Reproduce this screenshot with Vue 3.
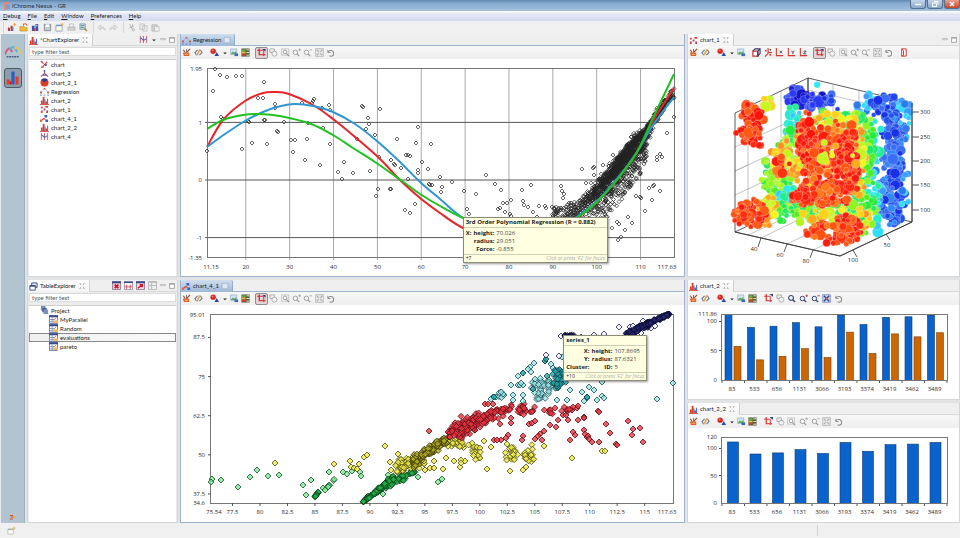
<script setup>
const menus = ['Debug', 'File', 'Edit', 'Window', 'Preferences', 'Help']

/* ---------- icons (10 x 10 artboards) ---------- */
const ic = {
  logo: '<path d="M2 1h6v2H5v2h3v2H5v3H2z" fill="#d98a7a"/><path d="M5 4h4v5H5z" fill="#7f9bc4"/>',
  newChart: '<path d="M1 9V5h2v4zM4 9V3h2v6z" fill="#d5342c"/><path d="M2 9V6h1v3zM6 9V4h1v5z" fill="#2a55b8"/><path d="M7 1.500h3M8.500 0v3.500" stroke="#e0a020"/>',
  open: '<path d="M1 4h5l1 1h2v4H1z" fill="#f0b93c" stroke="#a97414" stroke-width=".5"/><path d="M5 3V1h3l1 2" fill="none" stroke="#cf4a3c"/>',
  saveAll: '<path d="M1 3h3v6H1zM5 1h3v8H5z" fill="#2f55b5"/><path d="M3 6h2v3H3z" fill="#d33"/><path d="M6 2h1v2H6z" fill="#fff"/>',
  save: '<path d="M1.500 1.500h7v7h-7z" fill="#c9ccd0" stroke="#85898f"/><path d="M3 1.500h4v3H3z" fill="#fff"/>',
  wizard: '<path d="M1 3h7v6H1z" fill="#fffbe8" stroke="#7d8fb0" stroke-width=".8"/><path d="M1 2.500h7" stroke="#4a78c0"/><path d="M8 0v3M6.500 1.500h3" stroke="#e8b030"/>',
  print: '<path d="M1 4.500h8V8H1z" fill="#d7d7d7" stroke="#aaa" stroke-width=".7"/><path d="M3 1h4v3.500H3z" fill="#f4f4f4" stroke="#aaa" stroke-width=".7"/>',
  search: '<path d="M1 1h6v6H1z" fill="#c8d6ea" stroke="#5a7dad" stroke-width=".7"/><path d="M2 3h4M2 5h3" stroke="#4f9a50"/><path d="M6 6l3 3" stroke="#b88420" stroke-width="1.500"/>',
  back: '<path d="M1 5l3-3v2c3 0 5 1 5 4-1-2-2-2-5-2v2z" fill="#e4e4e4" stroke="#bbb" stroke-width=".6"/>',
  fwd: '<path d="M9 5L6 2v2C3 4 1 5 1 8c1-2 2-2 5-2v2z" fill="#e4e4e4" stroke="#bbb" stroke-width=".6"/>',
  cut: '<path d="M3 1l3 6M8 3L2 6M6 1v4" stroke="#aaa" fill="none" stroke-width=".8"/><circle cx="7" cy="7.500" r="1.300" fill="none" stroke="#aaa" stroke-width=".8"/>',
  copy: '<path d="M1 1h5v6H1zM4 3h5v6H4z" fill="#ececec" stroke="#b5b5b5" stroke-width=".7"/>',
  paste: '<path d="M1 2h6v7H1z" fill="#d2d2d2" stroke="#aaa" stroke-width=".7"/><path d="M4 4h5v5H4z" fill="#f2f2f2" stroke="#b5b5b5" stroke-width=".7"/>',
  brush: '<path d="M1 5h7v4H2z" fill="#e2602c"/><path d="M1.500 2l2 3M5 5l4-4" stroke="#a5502a" stroke-width="1.300"/><path d="M5 1v4" stroke="#6a6f7a"/><path d="M3 7h4" stroke="#f8c070"/>',
  link: '<path d="M4 2L1 5l2 3M6 8l3-3-2-3" fill="none" stroke="#6376a8" stroke-width="1.200"/><path d="M3.500 8l3-6.500" stroke="#e6a840" stroke-width="1.800"/>',
  dots: '<circle cx="3.500" cy="3.500" r="3" fill="#d8241c"/><path d="M7.500 4.500l2.500 4.500H5z" fill="#2547b0"/><circle cx="3" cy="2.800" r="1" fill="#f08878"/>',
  caret: '<path d="M2 4h6L5 7z" fill="#222"/>',
  image: '<path d="M.5 1h7v6h-7z" fill="#cfe4f6" stroke="#9db1c6" stroke-width=".8"/><path d="M1 6l2-2 2 1 2-2v4H1z" fill="#5fae62"/><path d="M5 6h4v3H5z" fill="#3f69b8"/>',
  legend: '<path d="M.5.500h9v9h-9z" fill="#595f45"/><path d="M1 1.500h4v2H1z" fill="#5fb548"/><path d="M1 4h4v2H1z" fill="#f0c62e"/><path d="M1 6.500h4v2H1z" fill="#d8412b"/><path d="M6 2h3M6 5h3M6 8h3" stroke="#f3edc9"/>',
  select: '<path d="M2.500.500v7H9.500" fill="none" stroke="#c42a2a" stroke-width="1.300"/><path d="M0 2.500h7.500V9" fill="none" stroke="#c42a2a"/><path d="M6 1h3.500v3z" fill="#27337e"/>',
  tree: '<path d="M2.500 0v7.500H9" fill="none" stroke="#d03030" stroke-width="1.300"/><path d="M0 2.500h7V9" fill="none" stroke="#d03030"/><path d="M6 0h4v3z" fill="#303a70"/>',
  shapes: '<path d="M1 1h5v4H1z" fill="#eee" stroke="#a3a3a3" stroke-width=".9"/><circle cx="6" cy="6.300" r="2.800" fill="#f5f5f5" stroke="#a3a3a3" stroke-width=".9"/>',
  zoomBoxOff: '<path d="M.5 1h8v7h-8z" fill="none" stroke="#bbb" stroke-width=".8"/><circle cx="4.500" cy="4.300" r="2" fill="#fff" stroke="#999"/><path d="M6 6l3 3" stroke="#999" stroke-width="1.400"/>',
  zoomInOff: '<circle cx="3.800" cy="4.800" r="2.500" fill="#f7f7f7" stroke="#999"/><path d="M5.700 6.500L8 9" stroke="#999" stroke-width="1.300"/><path d="M7 2h3M8.500.500v3" stroke="#999" stroke-width=".8"/>',
  zoomOutOff: '<circle cx="3.800" cy="4.800" r="2.500" fill="#f7f7f7" stroke="#999"/><path d="M5.700 6.500L8 9" stroke="#999" stroke-width="1.300"/><path d="M7 2h3" stroke="#999" stroke-width=".8"/>',
  fitOff: '<path d="M.7.700h8.600v8.600H.7z" fill="#e8e8e8" stroke="#bbb"/><path d="M2 2l6 6M8 2L2 8" stroke="#aaa" stroke-width="1.200"/><path d="M4 4h2v2H4z" fill="#f4f4f4"/>',
  zoomBox: '<circle cx="4.500" cy="4.300" r="2.700" fill="#eef4ff" stroke="#35486f" stroke-width="1.200"/><path d="M6.300 6.300L9 9" stroke="#35486f" stroke-width="1.600"/>',
  zoomIn: '<circle cx="3.800" cy="5" r="2.500" fill="#eef4ff" stroke="#35486f" stroke-width="1.100"/><path d="M5.700 6.800L8 9" stroke="#35486f" stroke-width="1.500"/><path d="M7 2h3M8.500.500v3" stroke="#d03030" stroke-width=".9"/>',
  zoomOut: '<circle cx="3.800" cy="5" r="2.500" fill="#eef4ff" stroke="#35486f" stroke-width="1.100"/><path d="M5.700 6.800L8 9" stroke="#35486f" stroke-width="1.500"/><path d="M7 2h3" stroke="#d03030" stroke-width=".9"/>',
  fit: '<path d="M.7.700h8.600v8.600H.7z" fill="#c9d3ee" stroke="#8b9bcb"/><path d="M2 2l6 6M8 2L2 8" stroke="#2c3c86" stroke-width="1.400"/><path d="M4 4h2v2H4z" fill="#e06a5a"/>',
  undo: '<path d="M2 2v3h3" fill="none" stroke="#8c8c8c"/><path d="M2 4.500c2-3 6.500-2 6.500 1.500S5 9.500 4 8.500" fill="none" stroke="#8c8c8c" stroke-width="1.200"/>',
  cube: '<path d="M1 3.500h5.500V9H1z" fill="#fff" stroke="#c8322c" stroke-width="1.300"/><path d="M1 3.500L3.500 1H9v5L6.500 9V3.500L9 1" fill="none" stroke="#333a66" stroke-width="1.200"/>',
  axes: '<path d="M4.500 0v6L1 9.500M4.500 5H9" fill="none" stroke="#c8322c" stroke-width="1.200"/><circle cx="7" cy="2" r="1" fill="#444"/><circle cx="7" cy="7.500" r="1.200" fill="#d33"/><circle cx="2" cy="3" r="1" fill="#d33"/>',
  axisA: '<path d="M1.500 0v8.500H9" fill="none" stroke="#d03a34" stroke-width="1.200"/><path d="M5 6l3-3M5 3l3 3" stroke="#444"/>',
  axisB: '<path d="M1.500 0v8.500H9" fill="none" stroke="#d03a34" stroke-width="1.200"/><path d="M5 3l1.500 2L8 3M6.500 5v2" stroke="#444" fill="none"/>',
  axisC: '<path d="M1.500 0v8.500H9" fill="none" stroke="#d03a34" stroke-width="1.200"/><path d="M5 3.500h3l-3 3h3" stroke="#444" fill="none"/>',
  door: '<path d="M3 1h5v8H3zM3 1l2 2v5L3 9" fill="#fff" stroke="#d03a34" stroke-width="1.100"/>',
  bars: '<path d="M1 5h2v4H1zM6 6h2v3H6z" fill="#e23a28"/><path d="M3 1h2v8H3z" fill="#d5402e"/><path d="M5 4h1v5H5zM8 3h1v6H8z" fill="#3558b8"/><path d="M0 9.500h10" stroke="#d8442f"/>',
  cross: '<path d="M1 1l3 3M8 2L3 7M1 8h3" stroke="#d83a3a" stroke-width="1.300"/><circle cx="6.500" cy="5.500" r="1.200" fill="#3558b8"/><circle cx="2" cy="2" r="1" fill="#c070a0"/>',
  three: '<path d="M5 1v4L1 8.500M5 5l4 3.500" fill="none" stroke="#b05070" stroke-width="1.300"/><path d="M3 7h4" stroke="#3558b8"/><circle cx="5" cy="2" r="1" fill="#445fa8"/>',
  pie: '<circle cx="5" cy="5" r="4.500" fill="#e03a1f"/><path d="M5 5L1.500 2A4.500 4.500 0 0 1 8.500 2z" fill="#27408f"/>',
  regr: '<path d="M1 8l2-5 4 0 2 5" fill="none" stroke="#8ba6d6" stroke-dasharray="1.500 1"/><path d="M4 1h2v1.500H4zM0 5h2v2H0zM8 5h2v2H8z" fill="#d84a44"/><path d="M0 9h2M4 9h2M8 9h2" stroke="#5f80c6"/>',
  multi: '<path d="M1 2h2v2H1zM1 6h2v3H1zM6 1h3v2H6z" fill="#d8453a"/><path d="M4 4h2v2H4zM7 6h2v3H7z" fill="#a04868"/>',
  line: '<path d="M1 8l3-3 2 1" fill="none" stroke="#d8453a" stroke-width="1.300"/><path d="M5 1h3v3H5zM6 6h3v3H6z" fill="#3b5fb5"/><path d="M0 6h2v3H0z" fill="#e06a5a"/>',
  parallel: '<path d="M1.500 1v8M5 1v8M8.500 1v8" stroke="#c96a86" stroke-width="1.100"/><path d="M1.500 3l3.500 3 3.500-2" fill="none" stroke="#4c5fb0" stroke-width="1.200"/>',
  stack: '<path d="M3 1h6v5H3z" fill="#dfe7f6" stroke="#34477f"/><path d="M1 4h6v5H1z" fill="#fff" stroke="#34477f"/><path d="M1 4.500h6" stroke="#34477f" stroke-width="1.500"/>',
  project: '<path d="M1 0h5v5H1z" fill="#8091b8"/><path d="M2.500 2h5v5h-5z" fill="#4d6295"/><path d="M4 4h5v5H4z" fill="#7c90bd"/>',
  table: '<path d="M.5.500h9v9h-9z" fill="#fff" stroke="#5c6ea8"/><path d="M0 1.500h10" stroke="#33478f" stroke-width="2"/><path d="M3.500 2v8M1 5h5M1 7.500h5" stroke="#6c7db3" stroke-width=".8"/><path d="M5 6h5v3H5z" fill="#f0b862"/><path d="M5 6l3-3" stroke="#d8742a"/>',
  tblDel: '<path d="M.5.500h9v9h-9z" fill="#f2c9cf" stroke="#8a7a98"/><path d="M0 1.500h10" stroke="#33478f" stroke-width="2"/><path d="M3 4l4 4M7 4L3 8" stroke="#d4162c" stroke-width="2"/>',
  tblCol: '<path d="M.5.500h9v9h-9z" fill="#fff" stroke="#99a"/><path d="M0 1.500h10" stroke="#33478f" stroke-width="1.500"/><path d="M3 4v5M7 4v5M1 6.500h8" stroke="#d8455a"/>',
  tblImp: '<path d="M.5.500h9v9h-9z" fill="#f4dbe0" stroke="#8a7a98"/><path d="M0 1.500h10" stroke="#33478f" stroke-width="2"/><path d="M2 8l5-4M4 4h3v3" stroke="#d4162c" stroke-width="1.600" fill="none"/>',
  tblOff: '<path d="M.5.500h9v9h-9z" fill="#eee" stroke="#b5b5b5"/><path d="M0 1.500h10M4 2v7M1 5h8" stroke="#b5b5b5"/>',
  nexus: '<path d="M0 6.500C1.500 2 3 2 4.500 5" fill="none" stroke="#e0567e" stroke-width="1.300"/><path d="M3 3.500C5 .5 6.500 2.500 7.500 5" fill="none" stroke="#58b7e0" stroke-width="1.300"/><path d="M6 3c1.500-1.500 3 0 4 3" fill="none" stroke="#e8c45a" stroke-width="1.200"/><path d="M1 8h8" stroke="#4b6086" stroke-width="1" stroke-dasharray="1.200 .4"/>',
  bigBars: '<path d="M1 6h2v3H1zM6.500 4h2v5h-2z" fill="#ea3b22"/><path d="M4 1h2v8H4z" fill="#2b5cc0"/><path d="M3 7h1v2H3z" fill="#b42a22"/>',
  run: '<path d="M1 3h4M2 5h4M1 7.500h4" stroke="#d0532f" stroke-width="1.300"/><path d="M6 3l3 2-3 2z" fill="#e4b24a"/>',
  status: '<path d="M1 4h6v5H1z" fill="#fbfbf4" stroke="#a9ac98" stroke-width=".7"/><path d="M1 3.500h6" stroke="#8aa58a"/><path d="M8 1v3M6.500 2.500h3" stroke="#dcb94a"/>',
  close: '<path d="M2 2l2 2M8 2L6 4M2 8l2-2M8 8L6 6M2 2h2M6 2h2M2 8h2M6 8h2" fill="none" stroke="#999" stroke-width=".8"/>',
  closeBox: '<path d="M1.500 1.500h7v7h-7z" fill="#dfe8f2" stroke="#9aa9bb" stroke-width=".8"/>',
  min: '<path d="M1 2.500h8v2H1z" fill="#fff" stroke="#888" stroke-width=".8"/>',
  max: '<path d="M1 1h8v8H1z" fill="#fff" stroke="#777"/><path d="M1 2h8" stroke="#777"/>'
}

const mainTools = [
  ['newChart', 'open', 'saveAll', 'save', 'wizard', 'print', 'search'],
  ['back', 'fwd'],
  ['cut', 'copy', 'paste']
]
const chartList = [
  ['cross', 'chart'], ['three', 'chart_3'], ['pie', 'chart_2_1'], ['regr', 'Regression'],
  ['bars', 'chart_2'], ['multi', 'chart_1'], ['line', 'chart_4_1'], ['bars', 'chart_2_2'], ['parallel', 'chart_4']
]
const tableList = ['MyParallel', 'Random', 'evaluations', 'pareto']

const offZoom = ['shapes', 'zoomBoxOff', 'zoomInOff', 'zoomOutOff', 'fitOff', 'undo']
const onZoom = ['shapes', 'zoomBox', 'zoomIn', 'zoomOut', 'fit', 'undo']
const panes = [
  { id: 'regression', title: 'Regression', icon: 'regr', focus: true, legend: true, axes: [], zoom: ['select', ...offZoom], box: '181 59 503 217' },
  { id: 'clusters', title: 'chart_4_1', icon: 'line', focus: true, legend: true, axes: [], zoom: ['select', ...offZoom], box: '181 305 503 217' },
  { id: 'bubbles', title: 'chart_1', icon: 'multi', legend: false, axes: ['cube', 'axes', 'axisA', 'axisB', 'axisC'], zoom: ['select', ...offZoom], extra: 'door', corner: true, box: '688 59 271 217' },
  { id: 'pairs', title: 'chart_2', icon: 'bars', legend: true, axes: [], zoom: ['tree', ...onZoom], wide: true, box: '688 305 271 94' },
  { id: 'singles', title: 'chart_2_2', icon: 'bars', legend: true, axes: [], zoom: ['tree', ...offZoom], wide: true, box: '688 428 271 94' }
]

/* ---------- helpers ---------- */
function rng(seed) {
  let a = seed
  return () => {
    a = (a + 0x6d2b79f5) | 0
    let t = Math.imul(a ^ (a >>> 15), 1 | a)
    t = (t + Math.imul(t ^ (t >>> 7), 61 | t)) ^ t
    return ((t ^ (t >>> 14)) >>> 0) / 4294967296
  }
}
const rand = rng(7)
const gauss = () => (rand() + rand() + rand() + rand() - 2) * 0.9
const pairsOf = s => s.trim().split(/\s+/).map(p => p.split(',').map(Number))
function smooth(s) {
  const p = pairsOf(s)
  let d = `M${p[0]}`
  for (let i = 0; i < p.length - 1; i++) {
    const a = p[i - 1] || p[i], b = p[i], c = p[i + 1], e = p[i + 2] || c
    d += `C${b[0] + (c[0] - a[0]) / 6},${b[1] + (c[1] - a[1]) / 6} ${c[0] - (e[0] - b[0]) / 6},${c[1] - (e[1] - b[1]) / 6} ${c}`
  }
  return d
}
function lerp(table, x) {
  for (let i = 0; i < table.length - 1; i++) {
    const a = table[i], b = table[i + 1]
    if (x <= b[0]) return a[1] + (b[1] - a[1]) * (x - a[0]) / (b[0] - a[0])
  }
  return table[table.length - 1][1]
}
const diamond = (x, y, r) => `M${x.toFixed(1)} ${(y - r).toFixed(1)}l${r} ${r}l${-r} ${r}l${-r} ${-r}z`

/* ---------- regression ---------- */
const rx = v => 207 + (v - 11.15) * 4.386
const ry = v => 180 - v * 57.6
const regXs = [20, 30, 40, 50, 60, 70, 80, 90, 100, 110]
const curves = [
  ['#e8232b', smooth('207,147 223,120 245,101 263,93 275,92 289,94 313,105 333,119 355,137 380,159 400,180 420,198 440,213 463,228 500,243 540,240 578,217 597,202 617,180 637,152 653,121 674,88')],
  ['#2f97cf', smooth('207,147 225,134 245,121 263,112 277,107 295,104 313,106 333,112 355,124 377,141 400,162 420,182 440,199 463,218 500,237 540,238 578,216 597,201 617,179 637,152 653,125 674,97')],
  ['#1fc31f', smooth('207,129 223,120 243,115 260,114 280,116 311,124 333,135 353,148 375,162 402,181 420,194 440,206 463,218 500,234 540,235 578,217 597,202 617,180 637,152 653,118 674,74')]
]
const strays = pairsOf(`215,69 220,75 227,77 236,76 242,76 264,82 213,91 258,98 263,98 275,104 275,108 302,103 314,99 313,101 312,103
322,108 329,105 330,110 221,117 223,119 249,122 248,121 265,120 264,120 284,122 308,123 323,128 277,131 278,132 252,143 267,144 242,149 291,140 295,140
307,139 293,152 330,144 363,107 362,106 380,109 368,118 369,124 366,129 375,135 357,139 397,139 418,127 416,143 431,144 406,155
408,155 410,156 207,151 379,157 305,160 320,165 338,172 342,179 344,162 353,173 370,171 378,189 376,196 391,189 390,189 391,160
395,165 394,164 401,168 408,179 418,170 418,173 422,162 428,169 429,184 430,185 432,185 405,210 410,213 415,204 440,177 452,182
442,187 441,192 464,191 486,175 476,194 495,184 501,190 522,190 531,185 511,200 523,201 507,203 503,203 498,209 500,208
505,212 510,214 524,205 528,207 533,212 467,209 469,214 539,206 545,206 546,208 552,207 537,217 511,216 561,186 562,191
564,194 563,198 582,169 586,183 593,168 594,167 594,175 603,165 613,155 667,133 674,117 660,154 657,157 662,157 657,160 653,186
649,188 654,185 660,191 652,200 645,211 628,217 632,223 625,230 618,240 621,237 617,222 619,224 612,228 636,196 640,197 641,198`)
const mid = pairsOf('552,219 567,214 578,210 597,194 617,168 637,141 645,134 653,120 665,103 674,93')
const up = pairsOf('552,9 567,12 597,17 617,15 637,10 645,6 653,5 674,4')
const down = pairsOf('552,26 580,32 600,36 620,38 640,37 648,26 655,14 674,4')
const cloud = []
for (let i = 0; i < 1000; i++) {
  const x = 624 + gauss() * 36
  if (x < 570 || x > 672) continue
  const g = Math.abs(gauss())
  cloud.push([x, lerp(mid, x) + (rand() < 0.6 ? -g * lerp(up, x) * 0.75 : g * lerp(down, x) * 0.4)])
}
for (let i = 0; i < 340; i++) {
  const x = 552 + Math.sqrt(rand()) * 95
  cloud.push([x, lerp(mid, x) + rand() * lerp(down, x)])
}
for (let i = 0; i < 130; i++) {
  const x = 552 + rand() * 45
  cloud.push([x, lerp(mid, x) - 11 + rand() * 16])
}
for (let i = 0; i < 120; i++) {
  const x = 645 + rand() * 29
  cloud.push([x, lerp(mid, x) + gauss() * 5])
}
const regPath = [...strays, ...cloud].filter(p => p[1] < 256).map(p => diamond(p[0], p[1], 2)).join('')

/* ---------- clusters ---------- */
const cx = v => 211 + (v - 75.54) * 10.99
const cy = v => 503 - (v - 34.6) * 3.129
const clusterXs = [77.5, 80, 82.5, 85, 87.5, 90, 92.5, 95, 97.5, 100, 102.5, 105, 107.5, 110, 112.5, 115]
const clusterYs = [37.5, 50, 62.5, 75, 87.5]
function along(n, x0, y0, x1, y1, s0, s1) {
  const out = []
  for (let i = 0; i < n; i++) {
    const t = rand()
    const s = s0 + (s1 - s0) * t
    out.push([x0 + (x1 - x0) * t + gauss() * s * 0.5, Math.min(502, y0 + (y1 - y0) * t + gauss() * s)])
  }
  return out
}
function spot(n, x, y, w, h) {
  return Array.from({ length: n }, () => {
    const a = rand() * 6.283, r = Math.sqrt(rand())
    return [x + Math.cos(a) * r * w, y + Math.sin(a) * r * h]
  })
}
const clusters = [
  { fill: '#7fe596', line: '#14562a', pts: [
    ...pairsOf('212,479 211,482 221,480 238,487 250,477 257,470 268,476 279,475 303,485 306,495 311,480 329,472 323,488 325,490 343,472 347,474 352,471 360,472 361,476 418,477 438,482 442,479 368,496 383,494 388,475'),
    ...along(7, 327, 488, 335, 479, 1, 1)] },
  { fill: '#24b04a', line: '#083d17', pts: [...along(90, 363, 502, 393, 479, 1, 3), ...along(48, 385, 486, 414, 472, 3, 3), ...along(12, 314, 497, 319, 492, 1, 1)] },
  { fill: '#eee94a', line: '#4f4c10', pts: [
    ...pairsOf('275,463 334,464 350,461 351,467 354,468 357,469 359,464 364,457 367,455 385,446 398,454 390,462 391,470 484,441 491,447 507,444 487,469 460,467 454,461 465,461 461,460 461,463 510,471 523,470 526,467 544,446 572,458 602,451 605,451 425,470 430,468 443,469 434,468 446,458 434,461'),
    ...along(70, 398, 467, 424, 458, 6, 6), ...spot(16, 476, 453, 6, 7),
    ...spot(17, 511, 454, 7, 8), ...spot(19, 530, 453, 7, 9), ...spot(26, 458, 443, 16, 5)] },
  { fill: '#b5ad22', line: '#343208', pts: [...along(120, 412, 463, 446, 439, 5, 4)] },
  { fill: '#ea3340', line: '#5e1017', pts: [
    ...pairsOf('429,431 485,404 488,404 493,404 500,424 511,418 511,423 529,424 532,423 535,421 550,425 556,427 558,420 563,415 568,420 566,415 572,410 577,408 578,406 578,420 584,417 584,418 598,411 599,412 606,424 610,433 628,421 633,429 640,428 632,435 643,442 616,444 617,445 599,442 592,442 584,430 585,434 587,437 588,436 589,439 573,432 575,435 570,440 544,431 540,434 538,436 535,439 542,440 523,436 522,440 508,435 506,438 501,440 494,440 497,440'),
    ...along(110, 448, 436, 478, 420, 7, 8), ...along(60, 472, 424, 512, 407, 8, 4), ...spot(22, 525, 409, 11, 6), ...along(16, 540, 411, 580, 409, 4, 4)] },
  { fill: '#9be4e4', line: '#1c4e54', pts: [
    ...pairsOf('534,363 530,367 528,369 531,372 523,373 518,376 511,385 518,385 520,385 523,385 521,383 513,395 513,400 493,397 491,399 496,397 500,395 501,392 504,395 523,395 523,401 545,361 551,364 553,368 562,357 570,390 582,392 589,387 594,390 587,397 587,398 584,401 597,400 602,396 604,398 602,382 657,399 557,400 567,400 673,383'),
    ...spot(6, 501, 394, 4, 4), ...spot(40, 542, 388, 11, 13)] },
  { fill: '#22a3a8', line: '#0c3d44', pts: [...spot(34, 559, 379, 7, 11), ...pairsOf('545,361 546,359 547,376 523,373 494,397 587,397 533,389')] },
  { fill: '#f4f4ff', line: '#1c1c55', pts: pairsOf('619,327 604,334 594,335 561,336 559,356 655,326 643,321 630,327 651,328 641,333 634,329 581,337 546,355 638,331 633,326') },
  { fill: '#25256a', line: '#0b0b30', pts: [...along(55, 626, 335, 648, 324, 2, 3), ...along(60, 645, 325, 669, 314, 2, 1).map(p => [p[0], Math.max(314, p[1])]), ...along(14, 565, 336, 575, 336, 1, 1)] }
].map(c => ({ ...c, pts: c.pts.map(p => diamond(p[0], p[1], 3)) }))

/* ---------- bubble cube ---------- */
const R = ['#ff1208', '#f81a0c', '#ff2a10', '#ff5a14']
const O = ['#ff5512', '#ff3010', '#ff7a1a', '#ff5010', '#fb1a0c']
const Y = ['#ffd21a', '#ffab1c', '#f4f41e', '#c8f51e', '#ff9020']
const G = ['#4df01e', '#2be93a', '#8df520', '#22e96a', '#b0f520']
const C = ['#22ecd0', '#2ee8f2', '#38c8ff', '#22ee98']
const L = ['#38c8ff', '#3a9cff', '#2ee0f8', '#2f78f0']
const B = ['#2452ee', '#1a30e6', '#3a6cf5', '#2f8af8', '#2244ea']
const N = ['#2020dc', '#2a3af0', '#3a55f2', '#1414c8']
const blobs = [
  [N, 46, 799, 97, 14, 11], [N, 24, 815, 101, 12, 9], [C, 1, 817, 84, 1, 1], [B, 7, 829, 99, 6, 6], [N, 1, 838, 110, 1, 1],
  [L, 14, 868, 103, 12, 9], [B, 34, 886, 107, 17, 12], [L, 10, 904, 106, 6, 6], [L, 8, 859, 109, 5, 5],
  [B, 60, 893, 130, 12, 18], [B, 70, 892, 165, 12, 24], [B, 80, 892, 202, 14, 25], [L, 10, 905, 127, 5, 20], [L, 8, 905, 190, 6, 22],
  [L, 26, 876, 196, 9, 38], [C, 34, 874, 140, 8, 26], [C, 30, 872, 198, 9, 38],
  [C, 30, 792, 124, 9, 19], [G, 30, 788, 146, 10, 18], [G, 76, 778, 182, 17, 30], [C, 14, 789, 198, 12, 16],
  [G, 60, 867, 142, 9, 26], [G, 60, 864, 195, 12, 40], [G, 34, 838, 119, 30, 8],
  [Y, 70, 832, 130, 30, 17], [Y, 90, 818, 160, 38, 30], [Y, 44, 786, 160, 16, 20], [O, 18, 781, 166, 9, 11], [Y, 34, 858, 164, 8, 40],
  [G, 60, 800, 212, 26, 13], [G, 50, 850, 212, 26, 12], [Y, 22, 826, 214, 26, 7], [Y, 20, 769, 212, 9, 16], [Y, 14, 864, 218, 9, 12],
  [O, 30, 836, 136, 24, 16], [R, 56, 806, 138, 9, 27], [O, 44, 820, 155, 20, 20], [R, 42, 849, 148, 11, 18],
  [O, 90, 830, 180, 28, 24], [R, 60, 847, 178, 12, 26], [O, 50, 822, 195, 22, 11], [R, 38, 801, 196, 10, 10], [Y, 8, 836, 160, 20, 22],
  [Y, 9, 767, 103, 7, 5], [R, 40, 752, 114, 13, 12], [O, 22, 745, 133, 10, 10], [R, 26, 754, 138, 9, 12],
  [R, 40, 753, 214, 13, 16], [O, 34, 743, 216, 9, 13], [O, 24, 816, 229, 12, 9], [R, 54, 846, 229, 16, 14], [O, 30, 836, 234, 16, 13]
]
const bubbles = []
for (const [pal, n, x, y, w, h] of blobs) {
  for (let i = 0; i < n; i++) {
    const a = rand() * 6.283, r = Math.pow(rand(), 0.6)
    bubbles.push({ x: (x + Math.cos(a) * r * w).toFixed(1), y: (y + Math.sin(a) * r * h).toFixed(1), r: (2.4 + rand() * rand() * 3.6).toFixed(1), c: pal[Math.floor(rand() * pal.length)] })
  }
}
const depthTicks = [[300, 112], [250, 137], [200, 161], [150, 185], [100, 210]]

/* ---------- bars ---------- */
const cats = [83, 533, 656, 1131, 3066, 3193, 3374, 3419, 3462, 3489]
const blue = [111.86, 90, 92, 98, 91, 111, 95, 107, 108, 111]
const orange = [58, 35, 41, 54, 39, 82, 46, 79, 74, 81]
const bx = i => 722 + i * 22.5
</script>

<template>
  <div class="window">
    <header class="title">
      <svg viewBox="0 0 10 10" class="ico" v-html="ic.logo"></svg>
      <span>iChrome Nexus - GR</span>
      <div class="winbtns">
        <button aria-label="Minimize"><svg viewBox="0 0 10 6"><path d="M2 3.500h6" stroke="#fff" stroke-width="1.500" /></svg></button>
        <button aria-label="Restore"><svg viewBox="0 0 10 6"><path d="M4 .500h4v3M2.500 2h4v3.500h-4z" fill="none" stroke="#fff" /></svg></button>
        <button aria-label="Close" class="danger"><svg viewBox="0 0 10 6"><path d="M3 1l4 4M7 1L3 5" stroke="#fff" stroke-width="1.400" /></svg></button>
      </div>
    </header>

    <nav class="menu">
      <button v-for="m in menus" :key="m"><u>{{ m[0] }}</u>{{ m.slice(1) }}</button>
    </nav>

    <div class="maintools">
      <div v-for="(g, i) in mainTools" :key="i" class="mgroup">
        <button v-for="t in g" :key="t" :aria-label="t"><svg viewBox="0 0 10 10" class="ico" v-html="ic[t]"></svg></button>
      </div>
    </div>

    <main class="work">
      <aside class="strip">
        <button class="persp" aria-label="Nexus"><svg viewBox="0 0 10 10" v-html="ic.nexus"></svg></button>
        <button class="persp on" aria-label="Charts"><svg viewBox="0 0 10 10" v-html="ic.bigBars"></svg></button>
        <button class="run" aria-label="Run"><svg viewBox="0 0 10 10" v-html="ic.run"></svg></button>
      </aside>

      <section class="pane explorer">
        <div class="head">
          <div class="tab">
            <svg viewBox="0 0 10 10" class="ico" v-html="ic.bars"></svg><span>*ChartExplorer</span>
            <svg viewBox="0 0 10 10" class="ico x" v-html="ic.close"></svg>
          </div>
          <div class="acts">
            <button aria-label="View"><svg viewBox="0 0 10 10" class="ico" v-html="ic.parallel"></svg></button>
            <button aria-label="View menu"><svg viewBox="0 0 10 10" class="ico small" v-html="ic.caret"></svg></button>
            <button aria-label="Minimize view"><svg viewBox="0 0 10 10" class="ico small" v-html="ic.min"></svg></button>
            <button aria-label="Maximize view"><svg viewBox="0 0 10 10" class="ico small" v-html="ic.max"></svg></button>
          </div>
        </div>
        <input class="filter" type="text" placeholder="type filter text" aria-label="Filter charts">
        <ul class="tree">
          <li v-for="c in chartList" :key="c[1]"><svg viewBox="0 0 10 10" class="ico" v-html="ic[c[0]]"></svg>{{ c[1] }}</li>
        </ul>
      </section>

      <section class="pane explorer lower">
        <div class="head">
          <div class="tab">
            <svg viewBox="0 0 10 10" class="ico" v-html="ic.stack"></svg><span>TableExplorer</span>
            <svg viewBox="0 0 10 10" class="ico x" v-html="ic.close"></svg>
          </div>
          <div class="acts">
            <button v-for="t in ['tblDel', 'tblCol', 'tblImp', 'tblOff']" :key="t" class="wide" :aria-label="t"><svg viewBox="0 0 10 10" class="ico" v-html="ic[t]"></svg></button>
            <button aria-label="Minimize view"><svg viewBox="0 0 10 10" class="ico small" v-html="ic.min"></svg></button>
            <button aria-label="Maximize view"><svg viewBox="0 0 10 10" class="ico small" v-html="ic.max"></svg></button>
          </div>
        </div>
        <input class="filter" type="text" placeholder="type filter text" aria-label="Filter tables">
        <ul class="tree">
          <li><svg viewBox="0 0 10 10" class="ico" v-html="ic.project"></svg>Project</li>
          <li v-for="t in tableList" :key="t" class="leaf" :class="{ picked: t === 'evaluations' }"><svg viewBox="0 0 10 10" class="ico" v-html="ic.table"></svg>{{ t }}</li>
        </ul>
      </section>

      <section v-for="p in panes" :key="p.id" class="pane view" :class="[p.id, { focus: p.focus }]">
        <div class="head">
          <div class="tab">
            <svg viewBox="0 0 10 10" class="ico" v-html="ic[p.icon]"></svg><span>{{ p.title }}</span>
            <svg viewBox="0 0 10 10" class="ico x" v-html="p.focus ? ic.closeBox : ic.close"></svg>
          </div>
          <div v-if="p.corner" class="acts">
            <button aria-label="Minimize view"><svg viewBox="0 0 10 10" class="ico small" v-html="ic.min"></svg></button>
            <button aria-label="Maximize view"><svg viewBox="0 0 10 10" class="ico small" v-html="ic.max"></svg></button>
          </div>
        </div>
        <div class="tools">
          <div class="group two">
            <button v-for="t in ['brush', 'link']" :key="t" :aria-label="t"><svg viewBox="0 0 10 10" class="ico" v-html="ic[t]"></svg></button>
          </div>
          <div class="group style">
            <button aria-label="Style"><svg viewBox="0 0 10 10" class="ico" v-html="ic.dots"></svg></button>
            <button aria-label="Style menu"><svg viewBox="0 0 10 10" class="ico small" v-html="ic.caret"></svg></button>
            <button aria-label="Export"><svg viewBox="0 0 10 10" class="ico" v-html="ic.image"></svg></button>
            <button v-if="p.legend" aria-label="Legend"><svg viewBox="0 0 10 10" class="ico" v-html="ic.legend"></svg></button>
          </div>
          <div v-if="p.axes.length" class="group five">
            <button v-for="t in p.axes" :key="t" :aria-label="t"><svg viewBox="0 0 10 10" class="ico" v-html="ic[t]"></svg></button>
          </div>
          <div class="group seven" :class="{ shift: p.wide }">
            <button v-for="t in p.zoom" :key="t" :aria-label="t" :class="{ down: t === 'select' }"><svg viewBox="0 0 10 10" class="ico" v-html="ic[t]"></svg></button>
          </div>
          <div v-if="p.extra" class="group one">
            <button :aria-label="p.extra"><svg viewBox="0 0 10 10" class="ico" v-html="ic[p.extra]"></svg></button>
          </div>
        </div>

        <div class="body">
          <svg class="plot" :viewBox="p.box">
            <g v-if="p.id === 'regression'">
              <g class="grid">
                <line v-for="v in regXs" :key="v" :x1="rx(v)" :x2="rx(v)" y1="68" y2="260" />
                <line v-for="v in [1, 0, -1]" :key="'h' + v" class="dark" x1="205" x2="674" :y1="ry(v)" :y2="ry(v)" />
              </g>
              <rect class="frame" x="207.500" y="68.500" width="467" height="189" />
              <path :d="regPath" class="hollow" />
              <path v-for="c in curves" :key="c[0]" :d="c[1]" :stroke="c[0]" class="curve" />
              <g class="end">
                <text x="202" y="71">1.95</text><text x="202" y="125">1</text><text x="202" y="182">0</text>
                <text x="202" y="240">-1</text><text x="202" y="260">-1.35</text>
              </g>
              <g class="mid">
                <text x="211" y="269">11.15</text>
                <text v-for="v in regXs" :key="v" :x="rx(v)" y="269">{{ v }}</text>
                <text x="667" y="269">117.63</text>
              </g>
            </g>

            <g v-else-if="p.id === 'clusters'">
              <rect class="frame" x="210.500" y="314.500" width="463" height="189" />
              <g class="ticks">
                <line v-for="v in clusterXs" :key="v" :x1="cx(v)" :x2="cx(v)" y1="503" y2="506" />
                <line v-for="v in clusterYs" :key="'y' + v" x1="208" x2="211" :y1="cy(v)" :y2="cy(v)" />
              </g>
              <g v-for="(c, i) in clusters" :key="i" :fill="c.fill" :stroke="c.line" class="mark">
                <path v-for="(d, j) in c.pts" :key="j" :d="d" />
              </g>
              <g class="end">
                <text x="205" y="317">95.01</text>
                <text v-for="v in clusterYs" :key="v" x="205" :y="cy(v) + 2">{{ v }}</text>
                <text x="205" y="505">34.6</text>
              </g>
              <g class="mid">
                <text x="214" y="514">75.54</text>
                <text v-for="v in clusterXs" :key="v" :x="cx(v)" y="514">{{ v }}</text>
                <text x="667" y="514">117.63</text>
              </g>
            </g>

            <g v-else-if="p.id === 'bubbles'">
              <path class="wall" d="M735 147L808 113M735 171L808 137M735 195L808 161M748 106V224M781 91V211M833 85V200M859 91V206M808 90L912 114M748 235L820 202M761 238L833 203M787 244L859 209M813 250L885 215M735 171L748 165" />
              <path class="cube" d="M735 113L808 78L912 103V222L840 256L735 232ZM808 78V197M735 232L808 197L912 222" />
              <circle v-for="(b, i) in bubbles" :key="i" :cx="b.x" :cy="b.y" :r="b.r" :fill="b.c" class="bubble" />
              <path class="cube" d="M808 78V92M912 103V222L840 256L735 232M761 238L758 247M787 244L784 252M813 250L810 258M853 250L857 257M886 234L890 240" />
              <g v-for="t in depthTicks" :key="t[0]">
                <line class="tick" x1="912" x2="919" :y1="t[1]" :y2="t[1]" />
                <text x="920" :y="t[1] + 2">{{ t[0] }}</text>
              </g>
              <g class="mid">
                <text x="754" y="251">40</text><text x="780" y="257">60</text><text x="806" y="263">80</text>
                <text x="853" y="262">100</text><text x="887" y="247">50</text>
              </g>
            </g>

            <g v-else-if="p.id === 'pairs'">
              <g class="ticks">
                <line v-for="i in 11" :key="i" :x1="bx(i - 1)" :x2="bx(i - 1)" y1="380" y2="383" />
                <line x1="719" x2="722" y1="321.500" y2="321.500" /><line x1="719" x2="722" y1="350.500" y2="350.500" />
              </g>
              <g v-for="(c, i) in cats" :key="c">
                <rect class="blue" :x="bx(i) + 3" width="7" :y="380.5 - blue[i] * 0.59" :height="blue[i] * 0.59" />
                <rect class="orange" :x="bx(i) + 12" width="7" :y="380.5 - orange[i] * 0.59" :height="orange[i] * 0.59" />
              </g>
              <rect class="frame" x="721.500" y="314.500" width="226" height="66" />
              <g class="end"><text x="717" y="316">111.86</text><text x="717" y="323">100</text><text x="717" y="353">50</text><text x="717" y="382">0</text></g>
              <g class="mid"><text v-for="(c, i) in cats" :key="c" :x="bx(i) + 10" y="391">{{ c }}</text></g>
            </g>

            <g v-else>
              <g class="ticks">
                <line v-for="i in 11" :key="i" :x1="bx(i - 1)" :x2="bx(i - 1)" y1="503" y2="506" />
                <line x1="719" x2="722" y1="448.500" y2="448.500" /><line x1="719" x2="722" y1="475.500" y2="475.500" />
              </g>
              <rect v-for="(c, i) in cats" :key="c" class="blue" :x="bx(i) + 5.5" width="11" :y="503.5 - blue[i] * 0.55" :height="blue[i] * 0.55" />
              <rect class="frame" x="721.500" y="437.500" width="226" height="66" />
              <g class="end"><text x="717" y="439">120</text><text x="717" y="450">100</text><text x="717" y="478">50</text><text x="717" y="505">0</text></g>
              <g class="mid"><text v-for="(c, i) in cats" :key="c" :x="bx(i) + 10" y="514">{{ c }}</text></g>
            </g>
          </svg>

          <div v-if="p.id === 'regression'" class="tip tipa">
            <h3>3rd Order Polynomial Regression (R = 0.882)</h3>
            <div class="rows">
              <b>X:</b><b>height:</b><span>70.026</span>
              <b></b><b>radius:</b><span>29.051</span>
              <b></b><b>Force:</b><span>-0.855</span>
            </div>
            <footer><span>+7</span><i>Click or press 'F2' for focus</i></footer>
          </div>
          <div v-if="p.id === 'clusters'" class="tip tipb">
            <h3>series_1</h3>
            <div class="rows">
              <b>X:</b><b>height:</b><span>107.8695</span>
              <b>Y:</b><b>radius:</b><span>87.6321</span>
              <b>Cluster:</b><b>ID:</b><span>5</span>
            </div>
            <footer><span>+10</span><i>Click or press 'F2' for focus</i></footer>
          </div>
        </div>
      </section>
    </main>

    <footer class="status"><svg viewBox="0 0 10 10" class="ico" v-html="ic.status"></svg><span class="divider"></span></footer>
  </div>
</template>

<style>
body { background: #f0f0f0; }
</style>

<style scoped>
.window {
  display: flex;
  flex-direction: column;
  height: 100vh;
  overflow: hidden;
  background: #f0f0f0;
  color: #1c1c1c;
  font: 6px/8px Lato, "Open Sans", sans-serif;
}
button {
  display: flex;
  align-items: center;
  justify-content: center;
  padding: 0;
  border: 0;
  background: none;
  color: inherit;
  font: inherit;
}
.ico { display: block; width: 9px; height: 9px; flex: none; }
.ico.small { width: 6px; height: 6px; }

.title {
  display: flex;
  align-items: center;
  gap: 1px;
  height: 11px;
  padding-left: 2px;
  background: linear-gradient(#6389b0, #86abd0 30%, #a4c2df);
  color: #1b2c44;
}
.winbtns { display: flex; gap: 1px; margin-left: auto; align-self: flex-start; }
.winbtns button { width: 16px; height: 9px; border: 1px solid #54708f; border-top: 0; border-radius: 0 0 3px 3px; background: linear-gradient(#c3d5e8, #89a8c8); }
.winbtns .danger { background: linear-gradient(#e9a08c, #c7452a); }
.winbtns svg { width: 10px; height: 6px; }

.menu {
  display: flex;
  align-items: center;
  gap: 7px;
  height: 10px;
  padding-left: 3px;
  background: linear-gradient(#fff, #e3e7f4 30%, #d6dbee);
}
.menu button { display: block; }
.menu u { text-decoration-thickness: 1px; text-underline-offset: 1px; }

.maintools { display: flex; align-items: center; height: 13px; padding-left: 3px; }
.mgroup { display: flex; align-items: center; height: 11px; padding: 0 4px 0 1px; border-left: 1px solid #d5d5d5; }
.mgroup button { width: 12px; height: 11px; }

.work {
  flex: 1;
  min-height: 0;
  display: grid;
  grid-template-columns: 25px minmax(0, 151fr) minmax(0, 505fr) minmax(0, 273fr);
  grid-template-rows: minmax(0, 243fr) minmax(0, 120fr) minmax(0, 120fr);
  gap: 3px 2px;
  background: #e2e3e5;
}
.strip {
  grid-area: 1 / 1 / 4 / 2;
  display: flex;
  flex-direction: column;
  align-items: center;
  gap: 6px;
  padding: 8px 0 2px;
  border-left: 1px solid #e8ecf0;
  border-right: 1px solid #9fb2c0;
  background: #b2c4cf;
}
.persp { width: 18px; height: 20px; border: 1px solid transparent; border-radius: 3px; }
.persp svg { width: 16px; height: 16px; }
.persp.on { border-color: #4d5a66; background: #8b9dab; }
.run { margin-top: auto; }
.run svg { width: 8px; height: 8px; }

.pane { display: flex; flex-direction: column; min-width: 0; min-height: 0; background: #fff; border: 1px solid #d3d5d8; border-top: 0; }
.explorer { grid-area: 1 / 2; background: #ececec; }
.lower { grid-area: 2 / 2 / 4 / 3; }
.regression { grid-area: 1 / 3; }
.clusters { grid-area: 2 / 3 / 4 / 4; }
.bubbles { grid-area: 1 / 4; }
.pairs { grid-area: 2 / 4; }
.singles { grid-area: 3 / 4; }
.focus { border-color: #9db4cf; }

.head { display: flex; height: 12px; background: #efefef; border-bottom: 1px solid #d8d8d8; box-sizing: border-box; flex: none; }
.tab { display: flex; align-items: center; gap: 2px; margin-bottom: -1px; padding: 0 3px 0 1px; border-right: 1px solid #cfcfcf; background: linear-gradient(#fff, #f3f3f3); }
.tab .x { width: 8px; height: 8px; }
.focus .head { border-bottom: 1px solid #9db4cf; }
.focus .tab { background: linear-gradient(#cfdeee, #9fb9d8); border-color: #93abc8; border-radius: 2px 2px 0 0; }
.acts { display: flex; align-items: center; gap: 3px; margin-left: auto; padding-right: 2px; }
.acts .wide { width: 9px; }

.filter {
  height: 9px;
  margin: 1px 1px 3px 1px;
  padding: 0 2px;
  box-sizing: border-box;
  border: 1px solid #dcdcdc;
  background: #fff;
  font: inherit;
  color: #222;
}
.filter::placeholder { color: #555; opacity: 1; }
.tree { flex: 1; min-height: 0; margin: 0 1px; padding: 0; list-style: none; background: #fff; border-top: 1px solid #d0d0d0; }
.tree li { display: flex; align-items: center; gap: 2px; height: 9px; padding-left: 11px; box-sizing: border-box; }
.tree .leaf { padding-left: 20px; }
.tree .picked { border: 1px solid #8a8a8a; padding-left: 19px; background: linear-gradient(90deg, #f0f0f0, #fafafa); }

.tools { display: flex; align-items: center; height: 13px; flex: none; background: linear-gradient(#f7f7f7, #eee); }
.group { display: flex; }
.group button { flex: 1; height: 12px; box-sizing: border-box; }
.two { width: 23px; margin-right: 4px; }
.style { margin-right: 4px; }
.style button { flex: none; width: 11px; }
.style button:nth-child(2) { width: 9px; }
.style button:first-child { width: 12px; }
.five { width: 58px; margin-right: 4px; }
.seven { width: 81px; }
.seven.shift { margin-left: 1px; }
.one { width: 12px; margin-left: 3px; }
.down { border: 1px solid #8d8d8d; border-radius: 2px; background: #e6d3d6; }

.body { position: relative; flex: 1; min-height: 0; background: #fff; }
.plot { display: block; width: 100%; height: 100%; }
.plot text { font: 6px "Open Sans", sans-serif; fill: #2b2b2b; }
.end { text-anchor: end; }
.mid { text-anchor: middle; }
.grid line { stroke: #a9a9a9; stroke-width: 1; }
.grid .dark { stroke: #555; }
.frame { fill: none; stroke: #777; stroke-width: 1; }
.ticks line, .tick { stroke: #555; stroke-width: 1; }
.hollow { fill: #fff; fill-opacity: 0.2; stroke: #222; stroke-width: 0.7; }
.curve { fill: none; stroke-width: 2; }
.mark { fill-opacity: 0.8; stroke-width: 0.8; }
.wall { fill: none; stroke: #aaa; stroke-width: 0.7; }
.cube { fill: none; stroke: #333; stroke-width: 0.8; }
.bubble { stroke: #fff; stroke-width: 0.4; stroke-opacity: 0.6; }
.blue { fill: #0a63cc; stroke: #123a70; stroke-width: 0.6; }
.orange { fill: #cc6600; stroke: #7a4210; stroke-width: 0.6; }

.tip { position: absolute; display: flex; flex-direction: column; box-sizing: border-box; border: 1px solid #8b8b78; background: #ffffe1; box-shadow: 1px 1px 2px rgba(0, 0, 0, 0.4); font-family: "Open Sans", sans-serif; }
.tipa { left: 56%; top: 73%; width: 145px; }
.tipb { left: 76%; top: 14%; width: 84px; }
.tip h3 { margin: 0; padding: 0 2px 1px; font-size: 6px; line-height: 8px; font-weight: 700; border-bottom: 1px solid #cfcfb4; white-space: nowrap; }
.rows { display: grid; grid-template-columns: auto auto 1fr; column-gap: 2px; padding: 1px 2px; line-height: 8px; }
.rows b { text-align: right; }
.rows span { color: #444; }
.tip footer { display: flex; justify-content: space-between; padding: 0 2px; border-top: 1px solid #cfcfb4; font-size: 5px; line-height: 7px; white-space: nowrap; }
.tip i { color: #aaa; }

.status { display: flex; align-items: center; height: 15px; padding-left: 7px; flex: none; }
.divider { height: 11px; margin-left: 84%; border-left: 1px solid #d2d2d2; }
</style>
